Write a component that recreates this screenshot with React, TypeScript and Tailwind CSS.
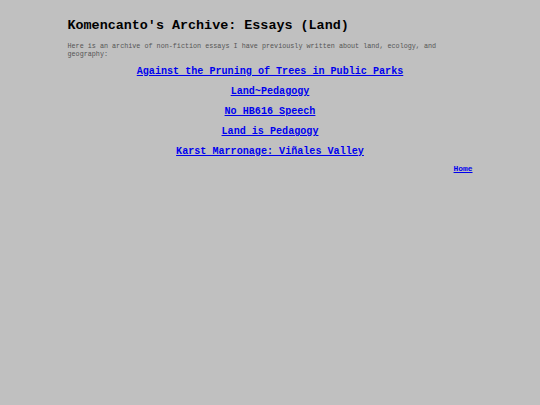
export default function App() {
  const essays = [
    'Against the Pruning of Trees in Public Parks',
    'Land~Pedagogy',
    'No HB616 Speech',
    'Land is Pedagogy',
    'Karst Marronage: Viñales Valley',
  ];

  return (
    <div className="min-h-[405px] w-full bg-[#c0c0c0] font-['Liberation_Mono',monospace]">
      <div className="mx-auto w-[405px] pt-[18px]">
        <h1 className="text-[13.4px] font-bold leading-[16px] text-black">Komencanto's Archive: Essays (Land)</h1>
        <p className="mt-[9px] text-[6.75px] leading-[7.5px] text-[#555]">
          Here is an archive of non-fiction essays I have previously written about land, ecology, and geography:
        </p>
        <div className="mt-[8px] flex flex-col items-center gap-[8.05px]">
          {essays.map((title) => (
            <a key={title} href="#" className="text-[10.1px] font-bold leading-[12px] text-[#0000ee] underline">
              {title}
            </a>
          ))}
        </div>
        <div className="mt-[6px] flex justify-end">
          <a href="#" className="text-[7.9px] font-bold leading-[10px] text-[#0000ee] underline">Home</a>
        </div>
      </div>
    </div>
  );
}
